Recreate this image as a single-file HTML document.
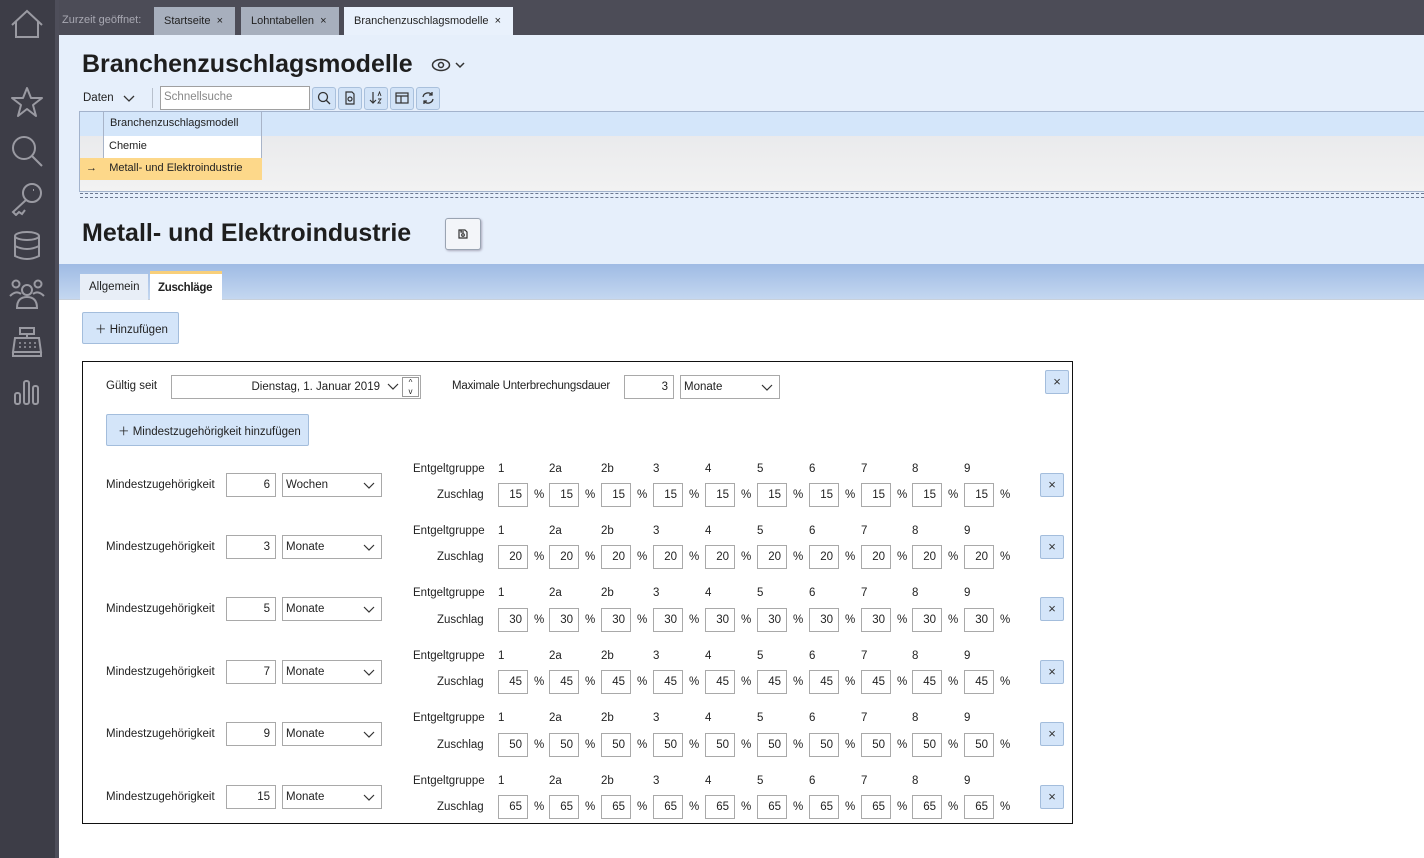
<!DOCTYPE html>
<html><head><meta charset="utf-8">
<style>
*{box-sizing:border-box;margin:0;padding:0}
body{width:1424px;height:858px;position:relative;overflow:hidden;background:#fff;font-family:"Liberation Sans",sans-serif;font-size:11.5px;color:#222}
.a{position:absolute;white-space:nowrap}
.side{left:0;top:0;width:59px;height:858px;background:#3d3d47;border-right:4px solid #4e4e5a}
.top{left:59px;top:0;width:1365px;height:35px;background:#4c4c57}
.tab{top:7px;height:28px;line-height:28px;padding:0 10px;color:#222;background:#a7afbd;font-size:11px}
.in{background:#fff;border:1px solid #a9a9a9;height:24px;line-height:22px;text-align:right;padding-right:5px}
.sel{background:#fff;border:1px solid #a9a9a9;height:24px;line-height:22px;padding-left:3px}
.sel svg{position:absolute;right:6px;top:8px}
.btn{background:#d4e5f9;border:1px solid #a3bddc;border-radius:2px}
.x{width:24px;height:24px;line-height:22px;text-align:center;font-size:13px;color:#333}
.tb{top:87px;width:24px;height:23px;background:#d2e3f7;border:1px solid #a9c0dc;border-radius:3px}
.row{left:0;width:1424px;height:60px}
</style></head><body>
<div class="a side"></div>
<svg class="a" style="left:8px;top:8px" width="38" height="32" viewBox="0 0 38 32" fill="none" stroke="#9a9aa2" stroke-width="2"><path d="M4 17 L19 3 L34 17 M8 13 V29 H30 V13"/></svg>
<svg class="a" style="left:10px;top:86px" width="34" height="32" viewBox="0 0 34 32" fill="none" stroke="#9a9aa2" stroke-width="2" stroke-linejoin="round"><path d="M17 2 L21 12 L32 12 L23 19 L26 30 L17 23 L8 30 L11 19 L2 12 L13 12 Z"/></svg>
<svg class="a" style="left:10px;top:134px" width="34" height="34" fill="none" stroke="#9a9aa2" stroke-width="2"><circle cx="14" cy="14" r="11"/><path d="M22 22 L32 32"/></svg>
<svg class="a" style="left:10px;top:182px" width="34" height="34" fill="none" stroke="#9a9aa2" stroke-width="2"><circle cx="22" cy="11" r="9"/><path d="M16 18 L3 30 L6 33 L9 30 L12 32 L15 28 M23 8 h1"/></svg>
<svg class="a" style="left:12px;top:230px" width="30" height="32" fill="none" stroke="#9a9aa2" stroke-width="2"><ellipse cx="15" cy="6" rx="12" ry="4"/><path d="M3 6 V26 Q15 32 27 26 V6 M3 16 Q15 22 27 16"/></svg>
<svg class="a" style="left:8px;top:278px" width="38" height="32" fill="none" stroke="#9a9aa2" stroke-width="2"><circle cx="8" cy="6" r="3.5"/><circle cx="30" cy="6" r="3.5"/><circle cx="19" cy="12" r="5"/><path d="M2 18 Q8 12 13 16 M36 18 Q30 12 25 16 M9 30 Q9 19 19 19 Q29 19 29 30 Z"/></svg>
<svg class="a" style="left:11px;top:326px" width="32" height="32" fill="none" stroke="#9a9aa2" stroke-width="2"><path d="M9 2 H23 V8 H9 Z M16 8 V12 M4 12 H28 L30 26 H2 Z M2 26 V30 H30 V26"/><path d="M8 17 h2 M13 17 h2 M18 17 h2 M23 17 h2 M8 21 h2 M13 21 h2 M18 21 h2 M23 21 h2" stroke-width="1.6"/></svg>
<svg class="a" style="left:12px;top:376px" width="30" height="30" fill="none" stroke="#9a9aa2" stroke-width="2"><rect x="3" y="17" width="5" height="11" rx="2"/><rect x="12" y="5" width="5" height="23" rx="2"/><rect x="21" y="10" width="5" height="18" rx="2"/></svg>

<div class="a top"></div>
<div class="a" style="left:62px;top:14px;color:#a8a8b2;font-size:11px">Zurzeit geöffnet:</div>
<div class="a tab" style="left:154px;width:81px">Startseite&nbsp;&nbsp;×</div>
<div class="a tab" style="left:241px;width:98px">Lohntabellen&nbsp;&nbsp;×</div>
<div class="a tab" style="left:344px;width:169px;background:#e9f1fc">Branchenzuschlagsmodelle&nbsp;&nbsp;×</div>

<div class="a" style="left:59px;top:35px;width:1365px;height:229px;background:#e6effb"></div>
<div class="a" style="left:82px;top:50px;font-size:25px;font-weight:bold;color:#1e1e1e">Branchenzuschlagsmodelle</div>
<svg class="a" style="left:431px;top:57px" width="36" height="16" fill="none" stroke="#333" stroke-width="1.5"><ellipse cx="10" cy="8" rx="8.5" ry="5.5"/><circle cx="10" cy="8" r="2.5"/><path d="M25 6 L29 10 L33 6"/></svg>
<div class="a" style="left:83px;top:92px">Daten</div>
<svg class="a" style="left:123px;top:95px" width="12" height="8" fill="none" stroke="#333" stroke-width="1.3"><path d="M1 1 L6 6 L11 1"/></svg>
<div class="a" style="left:152px;top:88px;width:1px;height:20px;background:#b8c0cc"></div>
<div class="a" style="left:160px;top:86px;width:150px;height:24px;background:#fff;border:1px solid #a0a0a0;padding:4px 3px;color:#888">Schnellsuche</div>
<div class="a tb" style="left:312px"></div><div class="a tb" style="left:338px"></div><div class="a tb" style="left:364px"></div><div class="a tb" style="left:390px"></div><div class="a tb" style="left:416px"></div>
<svg class="a" style="left:317px;top:91px" width="14" height="14" fill="none" stroke="#333" stroke-width="1.3"><circle cx="6" cy="6" r="4.5"/><path d="M9 9 L13 13"/></svg>
<svg class="a" style="left:344px;top:91px" width="12" height="14" fill="none" stroke="#333" stroke-width="1.2"><path d="M2 1 H8 L10 3 V13 H2 Z"/><circle cx="6" cy="8" r="2"/></svg>
<svg class="a" style="left:369px;top:91px" width="14" height="14" fill="none" stroke="#333" stroke-width="1.2"><path d="M4 1 V12 M1 9 L4 12 L7 9"/><path d="M9 5 L10.5 1 L12 5 M9 8 H12 L9 12 H12" stroke-width="0.9"/></svg>
<svg class="a" style="left:395px;top:92px" width="14" height="12" fill="none" stroke="#333" stroke-width="1.2"><rect x="1" y="1" width="12" height="10"/><path d="M1 4 H13 M6 4 V11"/></svg>
<svg class="a" style="left:421px;top:91px" width="14" height="14" fill="none" stroke="#333" stroke-width="1.3"><path d="M2 6 A5 5 0 0 1 11 4 M12 8 A5 5 0 0 1 3 10 M11 1 V4 H8 M3 13 V10 H6"/></svg>

<!-- grid -->
<div class="a" style="left:79px;top:111px;width:1345px;height:81px;border-top:1px solid #a3b3cc;border-left:1px solid #a3b3cc;border-bottom:1px solid #a3b3cc;background:linear-gradient(#e6e7ea,#f2f2f2)"></div>
<div class="a" style="left:80px;top:112px;width:1344px;height:24px;background:#d4e6fa"></div>
<div class="a" style="left:103px;top:112px;width:159px;height:24px;border-right:1px solid #a8b4c8;border-left:1px solid #a8b4c8;padding:5px 6px;color:#222;font-size:11px">Branchenzuschlagsmodell</div>
<div class="a" style="left:103px;top:136px;width:159px;height:22px;background:#fff;border-left:1px solid #a8b4c8;border-right:1px solid #a8b4c8;padding:4px 5px;font-size:11px">Chemie</div>
<div class="a" style="left:80px;top:158px;width:182px;height:22px;background:#fdd88a;padding:4px 6px;font-size:11px">→&nbsp;&nbsp;&nbsp;&nbsp;Metall- und Elektroindustrie</div>
<div class="a" style="left:80px;top:193px;width:1344px;height:0;border-top:1px dashed #6c7890"></div>
<div class="a" style="left:80px;top:197px;width:1344px;height:0;border-top:1px dashed #6c7890"></div>

<div class="a" style="left:82px;top:219px;font-size:25px;font-weight:bold;color:#1e1e1e">Metall- und Elektroindustrie</div>
<div class="a" style="left:445px;top:218px;width:36px;height:32px;background:#f3f5f9;border:1px solid #9aa4b2;border-radius:3px;box-shadow:1px 1px 2px #aab"></div>
<svg class="a" style="left:458px;top:229px" width="10" height="10" fill="none" stroke="#333" stroke-width="1.2"><path d="M1 1 H7 L9 3 V9 H1 Z M3 1 V3 H6"/><circle cx="5" cy="6" r="1.3"/></svg>

<div class="a" style="left:59px;top:264px;width:1365px;height:36px;background:linear-gradient(#9fbbe4,#c4d7f0);border-bottom:1px solid #c8d0da"></div>
<div class="a" style="left:80px;top:274px;width:68px;height:26px;background:#e8eef7;padding:7px 9px">Allgemein</div>
<div class="a" style="left:150px;top:271px;width:72px;height:29px;background:#fff;border-top:3px solid #f8cf7a;padding:8px 8px;font-weight:bold;letter-spacing:-0.3px">Zuschläge</div>

<div class="a btn" style="left:82px;top:312px;width:97px;height:32px;padding:8px 12px">＋ Hinzufügen</div>

<div class="a" style="left:82px;top:361px;width:991px;height:463px;border:1px solid #111"></div>
<div class="a" style="left:106px;top:380px">Gültig seit</div>
<div class="a in" style="left:171px;top:375px;width:250px;padding-right:40px">Dienstag, 1. Januar 2019</div>
<svg class="a" style="left:387px;top:383px" width="12" height="8" fill="none" stroke="#333" stroke-width="1.2"><path d="M1 1 L6 6 L11 1"/></svg>
<div class="a" style="left:402px;top:377px;width:17px;height:20px;border:1px solid #999;background:#fff;font-size:8px;text-align:center;line-height:9px;white-space:normal">^<br>v</div>
<div class="a" style="left:452px;top:380px;letter-spacing:-0.2px">Maximale Unterbrechungsdauer</div>
<div class="a in" style="left:624px;top:375px;width:50px">3</div>
<div class="a sel" style="left:680px;top:375px;width:100px">Monate<svg width="12" height="8" fill="none" stroke="#333" stroke-width="1.2"><path d="M1 1 L6 6 L11 1"/></svg></div>
<div class="a btn x" style="left:1045px;top:370px">×</div>
<div class="a btn" style="left:106px;top:414px;width:203px;height:32px;padding:8px 11px">＋ Mindestzugehörigkeit hinzufügen</div>

<!-- rows -->
<div class="a row" style="top:461px">
<div class="a" style="left:106px;top:18px">Mindestzugehörigkeit</div>
<div class="a in" style="left:226px;top:12px;width:50px">6</div>
<div class="a sel" style="left:282px;top:12px;width:100px">Wochen<svg width="12" height="8" fill="none" stroke="#333" stroke-width="1.2"><path d="M1 1 L6 6 L11 1"/></svg></div>
<div class="a" style="left:413px;top:2px">Entgeltgruppe</div><div class="a" style="left:437px;top:28px">Zuschlag</div>
<div class="a" style="left:498px;top:2px">1</div><div class="a" style="left:549px;top:2px">2a</div><div class="a" style="left:601px;top:2px">2b</div><div class="a" style="left:653px;top:2px">3</div><div class="a" style="left:705px;top:2px">4</div><div class="a" style="left:757px;top:2px">5</div><div class="a" style="left:809px;top:2px">6</div><div class="a" style="left:861px;top:2px">7</div><div class="a" style="left:912px;top:2px">8</div><div class="a" style="left:964px;top:2px">9</div>
<div class="a in" style="left:498px;top:22px;width:30px">15</div><div class="a in" style="left:549px;top:22px;width:30px">15</div><div class="a in" style="left:601px;top:22px;width:30px">15</div><div class="a in" style="left:653px;top:22px;width:30px">15</div><div class="a in" style="left:705px;top:22px;width:30px">15</div><div class="a in" style="left:757px;top:22px;width:30px">15</div><div class="a in" style="left:809px;top:22px;width:30px">15</div><div class="a in" style="left:861px;top:22px;width:30px">15</div><div class="a in" style="left:912px;top:22px;width:30px">15</div><div class="a in" style="left:964px;top:22px;width:30px">15</div>
<div class="a" style="left:534px;top:28px">%</div><div class="a" style="left:585px;top:28px">%</div><div class="a" style="left:637px;top:28px">%</div><div class="a" style="left:689px;top:28px">%</div><div class="a" style="left:741px;top:28px">%</div><div class="a" style="left:793px;top:28px">%</div><div class="a" style="left:845px;top:28px">%</div><div class="a" style="left:897px;top:28px">%</div><div class="a" style="left:948px;top:28px">%</div><div class="a" style="left:1000px;top:28px">%</div>
<div class="a btn x" style="left:1040px;top:12px">×</div>
</div>

<div class="a row" style="top:523px">
<div class="a" style="left:106px;top:18px">Mindestzugehörigkeit</div>
<div class="a in" style="left:226px;top:12px;width:50px">3</div>
<div class="a sel" style="left:282px;top:12px;width:100px">Monate<svg width="12" height="8" fill="none" stroke="#333" stroke-width="1.2"><path d="M1 1 L6 6 L11 1"/></svg></div>
<div class="a" style="left:413px;top:2px">Entgeltgruppe</div><div class="a" style="left:437px;top:28px">Zuschlag</div>
<div class="a" style="left:498px;top:2px">1</div><div class="a" style="left:549px;top:2px">2a</div><div class="a" style="left:601px;top:2px">2b</div><div class="a" style="left:653px;top:2px">3</div><div class="a" style="left:705px;top:2px">4</div><div class="a" style="left:757px;top:2px">5</div><div class="a" style="left:809px;top:2px">6</div><div class="a" style="left:861px;top:2px">7</div><div class="a" style="left:912px;top:2px">8</div><div class="a" style="left:964px;top:2px">9</div>
<div class="a in" style="left:498px;top:22px;width:30px">20</div><div class="a in" style="left:549px;top:22px;width:30px">20</div><div class="a in" style="left:601px;top:22px;width:30px">20</div><div class="a in" style="left:653px;top:22px;width:30px">20</div><div class="a in" style="left:705px;top:22px;width:30px">20</div><div class="a in" style="left:757px;top:22px;width:30px">20</div><div class="a in" style="left:809px;top:22px;width:30px">20</div><div class="a in" style="left:861px;top:22px;width:30px">20</div><div class="a in" style="left:912px;top:22px;width:30px">20</div><div class="a in" style="left:964px;top:22px;width:30px">20</div>
<div class="a" style="left:534px;top:28px">%</div><div class="a" style="left:585px;top:28px">%</div><div class="a" style="left:637px;top:28px">%</div><div class="a" style="left:689px;top:28px">%</div><div class="a" style="left:741px;top:28px">%</div><div class="a" style="left:793px;top:28px">%</div><div class="a" style="left:845px;top:28px">%</div><div class="a" style="left:897px;top:28px">%</div><div class="a" style="left:948px;top:28px">%</div><div class="a" style="left:1000px;top:28px">%</div>
<div class="a btn x" style="left:1040px;top:12px">×</div>
</div>

<div class="a row" style="top:585px">
<div class="a" style="left:106px;top:18px">Mindestzugehörigkeit</div>
<div class="a in" style="left:226px;top:12px;width:50px">5</div>
<div class="a sel" style="left:282px;top:12px;width:100px">Monate<svg width="12" height="8" fill="none" stroke="#333" stroke-width="1.2"><path d="M1 1 L6 6 L11 1"/></svg></div>
<div class="a" style="left:413px;top:2px">Entgeltgruppe</div><div class="a" style="left:437px;top:29px">Zuschlag</div>
<div class="a" style="left:498px;top:2px">1</div><div class="a" style="left:549px;top:2px">2a</div><div class="a" style="left:601px;top:2px">2b</div><div class="a" style="left:653px;top:2px">3</div><div class="a" style="left:705px;top:2px">4</div><div class="a" style="left:757px;top:2px">5</div><div class="a" style="left:809px;top:2px">6</div><div class="a" style="left:861px;top:2px">7</div><div class="a" style="left:912px;top:2px">8</div><div class="a" style="left:964px;top:2px">9</div>
<div class="a in" style="left:498px;top:23px;width:30px">30</div><div class="a in" style="left:549px;top:23px;width:30px">30</div><div class="a in" style="left:601px;top:23px;width:30px">30</div><div class="a in" style="left:653px;top:23px;width:30px">30</div><div class="a in" style="left:705px;top:23px;width:30px">30</div><div class="a in" style="left:757px;top:23px;width:30px">30</div><div class="a in" style="left:809px;top:23px;width:30px">30</div><div class="a in" style="left:861px;top:23px;width:30px">30</div><div class="a in" style="left:912px;top:23px;width:30px">30</div><div class="a in" style="left:964px;top:23px;width:30px">30</div>
<div class="a" style="left:534px;top:29px">%</div><div class="a" style="left:585px;top:29px">%</div><div class="a" style="left:637px;top:29px">%</div><div class="a" style="left:689px;top:29px">%</div><div class="a" style="left:741px;top:29px">%</div><div class="a" style="left:793px;top:29px">%</div><div class="a" style="left:845px;top:29px">%</div><div class="a" style="left:897px;top:29px">%</div><div class="a" style="left:948px;top:29px">%</div><div class="a" style="left:1000px;top:29px">%</div>
<div class="a btn x" style="left:1040px;top:12px">×</div>
</div>

<div class="a row" style="top:648px">
<div class="a" style="left:106px;top:18px">Mindestzugehörigkeit</div>
<div class="a in" style="left:226px;top:12px;width:50px">7</div>
<div class="a sel" style="left:282px;top:12px;width:100px">Monate<svg width="12" height="8" fill="none" stroke="#333" stroke-width="1.2"><path d="M1 1 L6 6 L11 1"/></svg></div>
<div class="a" style="left:413px;top:2px">Entgeltgruppe</div><div class="a" style="left:437px;top:28px">Zuschlag</div>
<div class="a" style="left:498px;top:2px">1</div><div class="a" style="left:549px;top:2px">2a</div><div class="a" style="left:601px;top:2px">2b</div><div class="a" style="left:653px;top:2px">3</div><div class="a" style="left:705px;top:2px">4</div><div class="a" style="left:757px;top:2px">5</div><div class="a" style="left:809px;top:2px">6</div><div class="a" style="left:861px;top:2px">7</div><div class="a" style="left:912px;top:2px">8</div><div class="a" style="left:964px;top:2px">9</div>
<div class="a in" style="left:498px;top:22px;width:30px">45</div><div class="a in" style="left:549px;top:22px;width:30px">45</div><div class="a in" style="left:601px;top:22px;width:30px">45</div><div class="a in" style="left:653px;top:22px;width:30px">45</div><div class="a in" style="left:705px;top:22px;width:30px">45</div><div class="a in" style="left:757px;top:22px;width:30px">45</div><div class="a in" style="left:809px;top:22px;width:30px">45</div><div class="a in" style="left:861px;top:22px;width:30px">45</div><div class="a in" style="left:912px;top:22px;width:30px">45</div><div class="a in" style="left:964px;top:22px;width:30px">45</div>
<div class="a" style="left:534px;top:28px">%</div><div class="a" style="left:585px;top:28px">%</div><div class="a" style="left:637px;top:28px">%</div><div class="a" style="left:689px;top:28px">%</div><div class="a" style="left:741px;top:28px">%</div><div class="a" style="left:793px;top:28px">%</div><div class="a" style="left:845px;top:28px">%</div><div class="a" style="left:897px;top:28px">%</div><div class="a" style="left:948px;top:28px">%</div><div class="a" style="left:1000px;top:28px">%</div>
<div class="a btn x" style="left:1040px;top:12px">×</div>
</div>

<div class="a row" style="top:710px">
<div class="a" style="left:106px;top:18px">Mindestzugehörigkeit</div>
<div class="a in" style="left:226px;top:12px;width:50px">9</div>
<div class="a sel" style="left:282px;top:12px;width:100px">Monate<svg width="12" height="8" fill="none" stroke="#333" stroke-width="1.2"><path d="M1 1 L6 6 L11 1"/></svg></div>
<div class="a" style="left:413px;top:2px">Entgeltgruppe</div><div class="a" style="left:437px;top:29px">Zuschlag</div>
<div class="a" style="left:498px;top:2px">1</div><div class="a" style="left:549px;top:2px">2a</div><div class="a" style="left:601px;top:2px">2b</div><div class="a" style="left:653px;top:2px">3</div><div class="a" style="left:705px;top:2px">4</div><div class="a" style="left:757px;top:2px">5</div><div class="a" style="left:809px;top:2px">6</div><div class="a" style="left:861px;top:2px">7</div><div class="a" style="left:912px;top:2px">8</div><div class="a" style="left:964px;top:2px">9</div>
<div class="a in" style="left:498px;top:23px;width:30px">50</div><div class="a in" style="left:549px;top:23px;width:30px">50</div><div class="a in" style="left:601px;top:23px;width:30px">50</div><div class="a in" style="left:653px;top:23px;width:30px">50</div><div class="a in" style="left:705px;top:23px;width:30px">50</div><div class="a in" style="left:757px;top:23px;width:30px">50</div><div class="a in" style="left:809px;top:23px;width:30px">50</div><div class="a in" style="left:861px;top:23px;width:30px">50</div><div class="a in" style="left:912px;top:23px;width:30px">50</div><div class="a in" style="left:964px;top:23px;width:30px">50</div>
<div class="a" style="left:534px;top:29px">%</div><div class="a" style="left:585px;top:29px">%</div><div class="a" style="left:637px;top:29px">%</div><div class="a" style="left:689px;top:29px">%</div><div class="a" style="left:741px;top:29px">%</div><div class="a" style="left:793px;top:29px">%</div><div class="a" style="left:845px;top:29px">%</div><div class="a" style="left:897px;top:29px">%</div><div class="a" style="left:948px;top:29px">%</div><div class="a" style="left:1000px;top:29px">%</div>
<div class="a btn x" style="left:1040px;top:12px">×</div>
</div>

<div class="a row" style="top:773px">
<div class="a" style="left:106px;top:18px">Mindestzugehörigkeit</div>
<div class="a in" style="left:226px;top:12px;width:50px">15</div>
<div class="a sel" style="left:282px;top:12px;width:100px">Monate<svg width="12" height="8" fill="none" stroke="#333" stroke-width="1.2"><path d="M1 1 L6 6 L11 1"/></svg></div>
<div class="a" style="left:413px;top:2px">Entgeltgruppe</div><div class="a" style="left:437px;top:28px">Zuschlag</div>
<div class="a" style="left:498px;top:2px">1</div><div class="a" style="left:549px;top:2px">2a</div><div class="a" style="left:601px;top:2px">2b</div><div class="a" style="left:653px;top:2px">3</div><div class="a" style="left:705px;top:2px">4</div><div class="a" style="left:757px;top:2px">5</div><div class="a" style="left:809px;top:2px">6</div><div class="a" style="left:861px;top:2px">7</div><div class="a" style="left:912px;top:2px">8</div><div class="a" style="left:964px;top:2px">9</div>
<div class="a in" style="left:498px;top:22px;width:30px">65</div><div class="a in" style="left:549px;top:22px;width:30px">65</div><div class="a in" style="left:601px;top:22px;width:30px">65</div><div class="a in" style="left:653px;top:22px;width:30px">65</div><div class="a in" style="left:705px;top:22px;width:30px">65</div><div class="a in" style="left:757px;top:22px;width:30px">65</div><div class="a in" style="left:809px;top:22px;width:30px">65</div><div class="a in" style="left:861px;top:22px;width:30px">65</div><div class="a in" style="left:912px;top:22px;width:30px">65</div><div class="a in" style="left:964px;top:22px;width:30px">65</div>
<div class="a" style="left:534px;top:28px">%</div><div class="a" style="left:585px;top:28px">%</div><div class="a" style="left:637px;top:28px">%</div><div class="a" style="left:689px;top:28px">%</div><div class="a" style="left:741px;top:28px">%</div><div class="a" style="left:793px;top:28px">%</div><div class="a" style="left:845px;top:28px">%</div><div class="a" style="left:897px;top:28px">%</div><div class="a" style="left:948px;top:28px">%</div><div class="a" style="left:1000px;top:28px">%</div>
<div class="a btn x" style="left:1040px;top:12px">×</div>
</div>
</body></html>
